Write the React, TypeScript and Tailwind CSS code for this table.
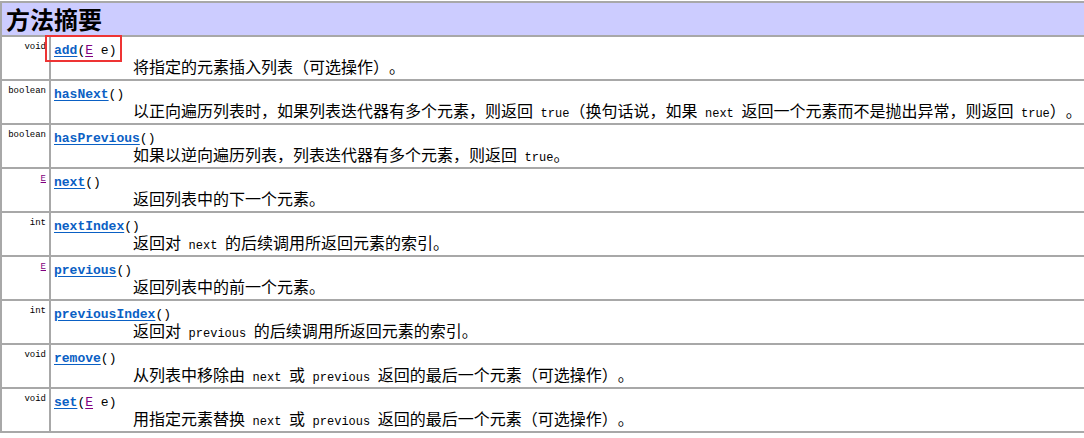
import React from 'react';

type Seg = string | { code: string };

interface Method {
  type: string;
  typeLink?: boolean;
  name: string;
  param?: boolean;
  desc: Seg[];
}

const methods: Method[] = [
  { type: 'void', name: 'add', param: true, desc: ['将指定的元素插入列表（可选操作）。'] },
  {
    type: 'boolean',
    name: 'hasNext',
    desc: [
      '以正向遍历列表时，如果列表迭代器有多个元素，则返回 ',
      { code: 'true' },
      '（换句话说，如果 ',
      { code: 'next' },
      ' 返回一个元素而不是抛出异常，则返回 ',
      { code: 'true' },
      '）。',
    ],
  },
  { type: 'boolean', name: 'hasPrevious', desc: ['如果以逆向遍历列表，列表迭代器有多个元素，则返回 ', { code: 'true' }, '。'] },
  { type: 'E', typeLink: true, name: 'next', desc: ['返回列表中的下一个元素。'] },
  { type: 'int', name: 'nextIndex', desc: ['返回对 ', { code: 'next' }, ' 的后续调用所返回元素的索引。'] },
  { type: 'E', typeLink: true, name: 'previous', desc: ['返回列表中的前一个元素。'] },
  { type: 'int', name: 'previousIndex', desc: ['返回对 ', { code: 'previous' }, ' 的后续调用所返回元素的索引。'] },
  {
    type: 'void',
    name: 'remove',
    desc: ['从列表中移除由 ', { code: 'next' }, ' 或 ', { code: 'previous' }, ' 返回的最后一个元素（可选操作）。'],
  },
  {
    type: 'void',
    name: 'set',
    param: true,
    desc: ['用指定元素替换 ', { code: 'next' }, ' 或 ', { code: 'previous' }, ' 返回的最后一个元素（可选操作）。'],
  },
];

const mono = "font-['Liberation_Mono','Courier_New',monospace]";
const cjk = "font-['Noto_Sans_CJK_SC',sans-serif] [text-spacing-trim:space-all]";

const MethodRow: React.FC<{ m: Method }> = ({ m }) => (
  <div className="flex h-[44px] border-b-2 border-l-2 border-[#a8a8a8]">
    {/* type column */}
    <div className={`${mono} w-[49px] shrink-0 border-r-2 border-[#a8a8a8] pr-[3px] pt-[4px] text-right text-[9px] leading-[12px]`}>
      {m.typeLink ? (
        <span className="text-[#800080] underline">{m.type}</span>
      ) : (
        <span className="text-black">{m.type}</span>
      )}
    </div>
    {/* summary column */}
    <div className="flex-1 pl-[3px] pt-[7px]">
      <div className={`${mono} h-[14px] text-[13px] leading-[14px] text-black whitespace-nowrap`}>
        <span className="font-bold text-[#0a60c4] underline underline-offset-2">{m.name}</span>
        (
        {m.param && (
          <>
            <span className="text-[#800080] underline underline-offset-2">E</span> e
          </>
        )}
        )
      </div>
      <div className={`${cjk} ml-[79px] h-[16px] text-[16px] leading-[16px] text-black whitespace-nowrap [word-spacing:4px]`}>
        {m.desc.map((s, i) =>
          typeof s === 'string' ? (
            <span key={i}>{s}</span>
          ) : (
            <span key={i} className={`${mono} text-[12px]`}>
              {s.code}
            </span>
          )
        )}
      </div>
    </div>
  </div>
);

export default function App() {
  return (
    <div className="relative h-[438px] w-[1084px] overflow-hidden bg-white pt-[1px]">
      <div className="w-[1100px]">
        <div className="flex h-[36px] items-center border-2 border-r-0 border-[#a8a8a8] bg-[#ccccff] pl-[4px]">
          <span className={`${cjk} text-[24px] font-bold leading-[28px] text-black`}>方法摘要</span>
        </div>
        {methods.map((m) => (
          <MethodRow key={m.name} m={m} />
        ))}
      </div>
      {/* highlight box */}
      <div className="pointer-events-none absolute left-[45px] top-[35px] h-[27px] w-[77px] border-2 border-[#ee3434]" />
    </div>
  );
}
